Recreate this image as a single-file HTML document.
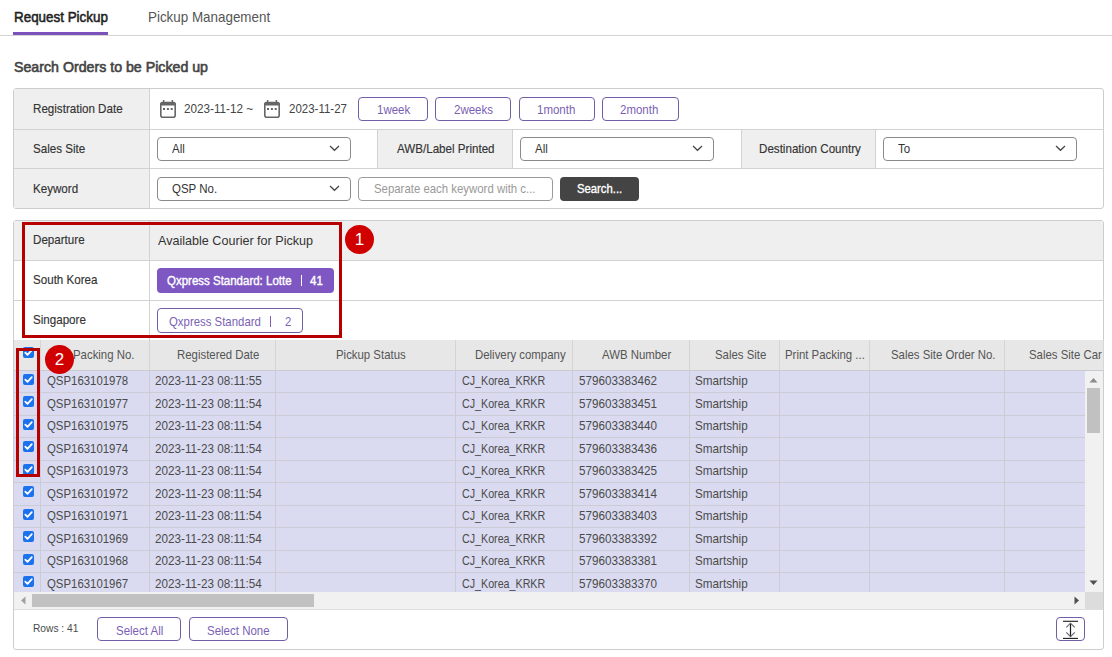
<!DOCTYPE html>
<html><head><meta charset="utf-8">
<style>
html,body{margin:0;padding:0;}
body{width:1112px;height:657px;overflow:hidden;background:#fff;position:relative;font-family:"Liberation Sans",sans-serif;}
.a{position:absolute;}
.t{position:absolute;line-height:1;white-space:nowrap;}
</style></head><body>
<div class="t" style="left:14px;top:9px;font-size:15.0px;color:#222;transform:scaleX(0.8933);transform-origin:0 0;-webkit-text-stroke:0.55px #222;">Request Pickup</div>
<div class="t" style="left:148px;top:9px;font-size:15.0px;color:#555;transform:scaleX(0.8933);transform-origin:0 0;">Pickup Management</div>
<div class="a" style="left:0px;top:35px;width:1112px;height:1px;background:#d4d4d4;"></div>
<div class="a" style="left:13px;top:32px;width:95px;height:3px;background:#7b52b9;"></div>
<div class="t" style="left:14px;top:60px;font-size:14.2px;color:#444;-webkit-text-stroke:0.6px #444;">Search Orders to be Picked up</div>
<div class="a" style="left:13px;top:88px;width:1091px;height:121px;box-sizing:border-box;border:1px solid #cdcdcd;border-radius:3px;"></div>
<div class="a" style="left:14px;top:89px;width:135px;height:119px;background:#efefef;"></div>
<div class="a" style="left:378px;top:130px;width:134px;height:38px;background:#efefef;"></div>
<div class="a" style="left:742px;top:130px;width:133px;height:38px;background:#efefef;"></div>
<div class="a" style="left:14px;top:129px;width:1089px;height:1px;background:#d2d2d2;"></div>
<div class="a" style="left:14px;top:168px;width:1089px;height:1px;background:#d2d2d2;"></div>
<div class="a" style="left:149px;top:89px;width:1px;height:119px;background:#d2d2d2;"></div>
<div class="a" style="left:377px;top:130px;width:1px;height:38px;background:#d2d2d2;"></div>
<div class="a" style="left:512px;top:130px;width:1px;height:38px;background:#d2d2d2;"></div>
<div class="a" style="left:741px;top:130px;width:1px;height:38px;background:#d2d2d2;"></div>
<div class="a" style="left:875px;top:130px;width:1px;height:38px;background:#d2d2d2;"></div>
<div class="t" style="left:33px;top:102px;font-size:13.0px;color:#333;transform:scaleX(0.8923);transform-origin:0 0;-webkit-text-stroke:0.15px #333;">Registration Date</div>
<div class="t" style="left:33px;top:142px;font-size:13.0px;color:#333;transform:scaleX(0.8923);transform-origin:0 0;-webkit-text-stroke:0.15px #333;">Sales Site</div>
<div class="t" style="left:33px;top:182px;font-size:13.0px;color:#333;transform:scaleX(0.8923);transform-origin:0 0;-webkit-text-stroke:0.15px #333;">Keyword</div>
<svg class="a" style="left:160px;top:100px" width="16" height="18" viewBox="0 0 16 18"><rect x="2.9" y="0" width="1.5" height="3" fill="#666"/><rect x="11.6" y="0" width="1.5" height="3" fill="#666"/><rect x="0.8" y="2.5" width="14.4" height="14.7" rx="2" fill="none" stroke="#666" stroke-width="1.6"/><rect x="0.5" y="2" width="15" height="3.4" rx="1.5" fill="#666"/><rect x="3" y="8" width="2" height="2" fill="#666"/><rect x="6.9" y="8" width="2" height="2" fill="#666"/><rect x="10.7" y="8" width="2" height="2" fill="#666"/></svg>
<svg class="a" style="left:264px;top:100px" width="16" height="18" viewBox="0 0 16 18"><rect x="2.9" y="0" width="1.5" height="3" fill="#666"/><rect x="11.6" y="0" width="1.5" height="3" fill="#666"/><rect x="0.8" y="2.5" width="14.4" height="14.7" rx="2" fill="none" stroke="#666" stroke-width="1.6"/><rect x="0.5" y="2" width="15" height="3.4" rx="1.5" fill="#666"/><rect x="3" y="8" width="2" height="2" fill="#666"/><rect x="6.9" y="8" width="2" height="2" fill="#666"/><rect x="10.7" y="8" width="2" height="2" fill="#666"/></svg>
<div class="t" style="left:184px;top:102px;font-size:13.1px;color:#444;transform:scaleX(0.8931);transform-origin:0 0;">2023-11-12 ~</div>
<div class="t" style="left:289px;top:103px;font-size:12.9px;color:#444;transform:scaleX(0.8915);transform-origin:0 0;">2023-11-27</div>
<div class="a" style="left:358px;top:97px;width:70px;height:24px;box-sizing:border-box;border:1px solid #725ea6;border-radius:4px;background:#fff;"></div>
<div class="t" style="left:377px;top:104px;font-size:12.9px;color:#7a5fb5;transform:scaleX(0.8915);transform-origin:0 0;">1week</div>
<div class="a" style="left:435px;top:97px;width:76px;height:24px;box-sizing:border-box;border:1px solid #725ea6;border-radius:4px;background:#fff;"></div>
<div class="t" style="left:454px;top:104px;font-size:12.9px;color:#7a5fb5;transform:scaleX(0.8915);transform-origin:0 0;">2weeks</div>
<div class="a" style="left:519px;top:97px;width:76px;height:24px;box-sizing:border-box;border:1px solid #725ea6;border-radius:4px;background:#fff;"></div>
<div class="t" style="left:537px;top:104px;font-size:12.9px;color:#7a5fb5;transform:scaleX(0.8915);transform-origin:0 0;">1month</div>
<div class="a" style="left:602px;top:97px;width:77px;height:24px;box-sizing:border-box;border:1px solid #725ea6;border-radius:4px;background:#fff;"></div>
<div class="t" style="left:620px;top:104px;font-size:12.9px;color:#7a5fb5;transform:scaleX(0.8915);transform-origin:0 0;">2month</div>
<div class="t" style="left:397px;top:142px;font-size:13.0px;color:#333;transform:scaleX(0.8923);transform-origin:0 0;-webkit-text-stroke:0.15px #333;">AWB/Label Printed</div>
<div class="t" style="left:759px;top:142px;font-size:13.0px;color:#333;transform:scaleX(0.8923);transform-origin:0 0;-webkit-text-stroke:0.15px #333;">Destination Country</div>
<div class="a" style="left:157px;top:137px;width:194px;height:24px;box-sizing:border-box;border:1px solid #8a8a8a;border-radius:4px;background:#fff;"></div>
<div class="t" style="left:172px;top:143px;font-size:12.9px;color:#333;transform:scaleX(0.8915);transform-origin:0 0;">All</div>
<svg class="a" style="left:329px;top:145px" width="11" height="7" viewBox="0 0 11 7"><polyline points="1,1 5.5,5.3 10,1" fill="none" stroke="#444" stroke-width="1.2"/></svg>
<div class="a" style="left:520px;top:137px;width:194px;height:24px;box-sizing:border-box;border:1px solid #8a8a8a;border-radius:4px;background:#fff;"></div>
<div class="t" style="left:535px;top:143px;font-size:12.9px;color:#333;transform:scaleX(0.8915);transform-origin:0 0;">All</div>
<svg class="a" style="left:692px;top:145px" width="11" height="7" viewBox="0 0 11 7"><polyline points="1,1 5.5,5.3 10,1" fill="none" stroke="#444" stroke-width="1.2"/></svg>
<div class="a" style="left:883px;top:137px;width:194px;height:24px;box-sizing:border-box;border:1px solid #8a8a8a;border-radius:4px;background:#fff;"></div>
<div class="t" style="left:898px;top:143px;font-size:12.9px;color:#333;transform:scaleX(0.8915);transform-origin:0 0;">To</div>
<svg class="a" style="left:1055px;top:145px" width="11" height="7" viewBox="0 0 11 7"><polyline points="1,1 5.5,5.3 10,1" fill="none" stroke="#444" stroke-width="1.2"/></svg>
<div class="a" style="left:157px;top:177px;width:194px;height:24px;box-sizing:border-box;border:1px solid #8a8a8a;border-radius:4px;background:#fff;"></div>
<div class="t" style="left:172px;top:183px;font-size:12.9px;color:#333;transform:scaleX(0.8915);transform-origin:0 0;">QSP No.</div>
<svg class="a" style="left:329px;top:185px" width="11" height="7" viewBox="0 0 11 7"><polyline points="1,1 5.5,5.3 10,1" fill="none" stroke="#444" stroke-width="1.2"/></svg>
<div class="a" style="left:358px;top:177px;width:195px;height:24px;box-sizing:border-box;border:1px solid #9a9a9a;border-radius:4px;background:#fff;"></div>
<div class="t" style="left:374px;top:183px;font-size:12.8px;color:#999;transform:scaleX(0.8906);transform-origin:0 0;">Separate each keyword with c...</div>
<div class="a" style="left:560px;top:177px;width:79px;height:24px;background:#444;border-radius:4px;"></div>
<div class="t" style="left:577px;top:183px;font-size:12.7px;color:#fff;transform:scaleX(0.8898);transform-origin:0 0;-webkit-text-stroke:0.35px #fff;">Search...</div>
<div class="a" style="left:13px;top:220px;width:1091px;height:430px;box-sizing:border-box;border:1px solid #cdcdcd;border-radius:3px;"></div>
<div class="a" style="left:14px;top:221px;width:1089px;height:39px;background:#efefef;"></div>
<div class="a" style="left:14px;top:260px;width:1089px;height:1px;background:#d2d2d2;"></div>
<div class="a" style="left:14px;top:300px;width:1089px;height:1px;background:#d2d2d2;"></div>
<div class="a" style="left:149px;top:221px;width:1px;height:119px;background:#d2d2d2;"></div>
<div class="t" style="left:33px;top:233px;font-size:13.0px;color:#333;transform:scaleX(0.8923);transform-origin:0 0;-webkit-text-stroke:0.15px #333;">Departure</div>
<div class="t" style="left:157.5px;top:234px;font-size:13.2px;color:#333;transform:scaleX(0.9545);transform-origin:0 0;">Available Courier for Pickup</div>
<div class="t" style="left:33px;top:273px;font-size:13.0px;color:#333;transform:scaleX(0.8923);transform-origin:0 0;-webkit-text-stroke:0.15px #333;">South Korea</div>
<div class="t" style="left:33px;top:313px;font-size:13.0px;color:#333;transform:scaleX(0.8923);transform-origin:0 0;-webkit-text-stroke:0.15px #333;">Singapore</div>
<div class="a" style="left:157px;top:268px;width:177px;height:25px;background:#7e57c2;border-radius:4px;"></div>
<div class="t" style="left:167.4px;top:275px;font-size:12.9px;color:#fff;transform:scaleX(0.8915);transform-origin:0 0;-webkit-text-stroke:0.4px #fff;">Qxpress Standard: Lotte</div>
<div class="a" style="left:301px;top:275px;width:1px;height:11px;background:#fff;"></div>
<div class="t" style="left:310px;top:275px;font-size:12.9px;color:#fff;transform:scaleX(0.8915);transform-origin:0 0;-webkit-text-stroke:0.4px #fff;">41</div>
<div class="a" style="left:157px;top:308px;width:146px;height:25px;box-sizing:border-box;border:1px solid #725ea6;border-radius:4px;background:#fff;"></div>
<div class="t" style="left:169px;top:316px;font-size:12.8px;color:#7a5fb5;transform:scaleX(0.8906);transform-origin:0 0;">Qxpress Standard</div>
<div class="a" style="left:270px;top:316px;width:1px;height:11px;background:#7a5fb5;"></div>
<div class="t" style="left:285px;top:316px;font-size:12.8px;color:#7a5fb5;transform:scaleX(0.8906);transform-origin:0 0;">2</div>
<div class="a" style="left:14px;top:340px;width:1089px;height:30px;background:#e7e7e7;"></div>
<div class="a" style="left:14px;top:371px;width:1071px;height:221px;background:#dadbf0;"></div>
<div class="a" style="left:14px;top:370px;width:1089px;height:1px;background:#c9c9d1;"></div>
<div class="a" style="left:40px;top:340px;width:1px;height:30px;background:#d4d4d4;"></div>
<div class="a" style="left:40px;top:370px;width:1px;height:222px;background:#cbccd4;"></div>
<div class="a" style="left:149px;top:340px;width:1px;height:30px;background:#d4d4d4;"></div>
<div class="a" style="left:149px;top:370px;width:1px;height:222px;background:#cbccd4;"></div>
<div class="a" style="left:275px;top:340px;width:1px;height:30px;background:#d4d4d4;"></div>
<div class="a" style="left:275px;top:370px;width:1px;height:222px;background:#cbccd4;"></div>
<div class="a" style="left:455px;top:340px;width:1px;height:30px;background:#d4d4d4;"></div>
<div class="a" style="left:455px;top:370px;width:1px;height:222px;background:#cbccd4;"></div>
<div class="a" style="left:572px;top:340px;width:1px;height:30px;background:#d4d4d4;"></div>
<div class="a" style="left:572px;top:370px;width:1px;height:222px;background:#cbccd4;"></div>
<div class="a" style="left:689px;top:340px;width:1px;height:30px;background:#d4d4d4;"></div>
<div class="a" style="left:689px;top:370px;width:1px;height:222px;background:#cbccd4;"></div>
<div class="a" style="left:779px;top:340px;width:1px;height:30px;background:#d4d4d4;"></div>
<div class="a" style="left:779px;top:370px;width:1px;height:222px;background:#cbccd4;"></div>
<div class="a" style="left:869px;top:340px;width:1px;height:30px;background:#d4d4d4;"></div>
<div class="a" style="left:869px;top:370px;width:1px;height:222px;background:#cbccd4;"></div>
<div class="a" style="left:1004px;top:340px;width:1px;height:30px;background:#d4d4d4;"></div>
<div class="a" style="left:1004px;top:370px;width:1px;height:222px;background:#cbccd4;"></div>
<div class="a" style="left:14px;top:392px;width:1071px;height:1px;background:#cbccd4;"></div>
<div class="a" style="left:14px;top:415px;width:1071px;height:1px;background:#cbccd4;"></div>
<div class="a" style="left:14px;top:437px;width:1071px;height:1px;background:#cbccd4;"></div>
<div class="a" style="left:14px;top:460px;width:1071px;height:1px;background:#cbccd4;"></div>
<div class="a" style="left:14px;top:482px;width:1071px;height:1px;background:#cbccd4;"></div>
<div class="a" style="left:14px;top:505px;width:1071px;height:1px;background:#cbccd4;"></div>
<div class="a" style="left:14px;top:527px;width:1071px;height:1px;background:#cbccd4;"></div>
<div class="a" style="left:14px;top:550px;width:1071px;height:1px;background:#cbccd4;"></div>
<div class="a" style="left:14px;top:572px;width:1071px;height:1px;background:#cbccd4;"></div>
<div class="a" style="left:23px;top:374px;width:11px;height:11px;border-radius:2px;background:#1b72ec;"><svg style="display:block" width="11" height="11" viewBox="0 0 11 11"><polyline points="2.3,5.6 4.5,7.9 8.8,3.1" fill="none" stroke="#fff" stroke-width="1.8" stroke-linecap="round" stroke-linejoin="round"/></svg></div>
<div class="t" style="left:47px;top:375px;font-size:12.8px;color:#4a4a4a;transform:scaleX(0.8906);transform-origin:0 0;">QSP163101978</div>
<div class="t" style="left:155px;top:374px;font-size:13.1px;color:#4a4a4a;transform:scaleX(0.8931);transform-origin:0 0;">2023-11-23 08:11:55</div>
<div class="t" style="left:461.5px;top:374px;font-size:13.1px;color:#4a4a4a;transform:scaleX(0.8168);transform-origin:0 0;">CJ_Korea_KRKR</div>
<div class="t" style="left:578.5px;top:374px;font-size:13.1px;color:#4a4a4a;transform:scaleX(0.8931);transform-origin:0 0;">579603383462</div>
<div class="t" style="left:695px;top:374px;font-size:13.1px;color:#4a4a4a;transform:scaleX(0.8931);transform-origin:0 0;">Smartship</div>
<div class="a" style="left:23px;top:396px;width:11px;height:11px;border-radius:2px;background:#1b72ec;"><svg style="display:block" width="11" height="11" viewBox="0 0 11 11"><polyline points="2.3,5.6 4.5,7.9 8.8,3.1" fill="none" stroke="#fff" stroke-width="1.8" stroke-linecap="round" stroke-linejoin="round"/></svg></div>
<div class="t" style="left:47px;top:398px;font-size:12.8px;color:#4a4a4a;transform:scaleX(0.8906);transform-origin:0 0;">QSP163101977</div>
<div class="t" style="left:155px;top:397px;font-size:13.1px;color:#4a4a4a;transform:scaleX(0.8931);transform-origin:0 0;">2023-11-23 08:11:54</div>
<div class="t" style="left:461.5px;top:397px;font-size:13.1px;color:#4a4a4a;transform:scaleX(0.8168);transform-origin:0 0;">CJ_Korea_KRKR</div>
<div class="t" style="left:578.5px;top:397px;font-size:13.1px;color:#4a4a4a;transform:scaleX(0.8931);transform-origin:0 0;">579603383451</div>
<div class="t" style="left:695px;top:397px;font-size:13.1px;color:#4a4a4a;transform:scaleX(0.8931);transform-origin:0 0;">Smartship</div>
<div class="a" style="left:23px;top:419px;width:11px;height:11px;border-radius:2px;background:#1b72ec;"><svg style="display:block" width="11" height="11" viewBox="0 0 11 11"><polyline points="2.3,5.6 4.5,7.9 8.8,3.1" fill="none" stroke="#fff" stroke-width="1.8" stroke-linecap="round" stroke-linejoin="round"/></svg></div>
<div class="t" style="left:47px;top:420px;font-size:12.8px;color:#4a4a4a;transform:scaleX(0.8906);transform-origin:0 0;">QSP163101975</div>
<div class="t" style="left:155px;top:419px;font-size:13.1px;color:#4a4a4a;transform:scaleX(0.8931);transform-origin:0 0;">2023-11-23 08:11:54</div>
<div class="t" style="left:461.5px;top:419px;font-size:13.1px;color:#4a4a4a;transform:scaleX(0.8168);transform-origin:0 0;">CJ_Korea_KRKR</div>
<div class="t" style="left:578.5px;top:419px;font-size:13.1px;color:#4a4a4a;transform:scaleX(0.8931);transform-origin:0 0;">579603383440</div>
<div class="t" style="left:695px;top:419px;font-size:13.1px;color:#4a4a4a;transform:scaleX(0.8931);transform-origin:0 0;">Smartship</div>
<div class="a" style="left:23px;top:441px;width:11px;height:11px;border-radius:2px;background:#1b72ec;"><svg style="display:block" width="11" height="11" viewBox="0 0 11 11"><polyline points="2.3,5.6 4.5,7.9 8.8,3.1" fill="none" stroke="#fff" stroke-width="1.8" stroke-linecap="round" stroke-linejoin="round"/></svg></div>
<div class="t" style="left:47px;top:443px;font-size:12.8px;color:#4a4a4a;transform:scaleX(0.8906);transform-origin:0 0;">QSP163101974</div>
<div class="t" style="left:155px;top:442px;font-size:13.1px;color:#4a4a4a;transform:scaleX(0.8931);transform-origin:0 0;">2023-11-23 08:11:54</div>
<div class="t" style="left:461.5px;top:442px;font-size:13.1px;color:#4a4a4a;transform:scaleX(0.8168);transform-origin:0 0;">CJ_Korea_KRKR</div>
<div class="t" style="left:578.5px;top:442px;font-size:13.1px;color:#4a4a4a;transform:scaleX(0.8931);transform-origin:0 0;">579603383436</div>
<div class="t" style="left:695px;top:442px;font-size:13.1px;color:#4a4a4a;transform:scaleX(0.8931);transform-origin:0 0;">Smartship</div>
<div class="a" style="left:23px;top:464px;width:11px;height:11px;border-radius:2px;background:#1b72ec;"><svg style="display:block" width="11" height="11" viewBox="0 0 11 11"><polyline points="2.3,5.6 4.5,7.9 8.8,3.1" fill="none" stroke="#fff" stroke-width="1.8" stroke-linecap="round" stroke-linejoin="round"/></svg></div>
<div class="t" style="left:47px;top:465px;font-size:12.8px;color:#4a4a4a;transform:scaleX(0.8906);transform-origin:0 0;">QSP163101973</div>
<div class="t" style="left:155px;top:464px;font-size:13.1px;color:#4a4a4a;transform:scaleX(0.8931);transform-origin:0 0;">2023-11-23 08:11:54</div>
<div class="t" style="left:461.5px;top:464px;font-size:13.1px;color:#4a4a4a;transform:scaleX(0.8168);transform-origin:0 0;">CJ_Korea_KRKR</div>
<div class="t" style="left:578.5px;top:464px;font-size:13.1px;color:#4a4a4a;transform:scaleX(0.8931);transform-origin:0 0;">579603383425</div>
<div class="t" style="left:695px;top:464px;font-size:13.1px;color:#4a4a4a;transform:scaleX(0.8931);transform-origin:0 0;">Smartship</div>
<div class="a" style="left:23px;top:486px;width:11px;height:11px;border-radius:2px;background:#1b72ec;"><svg style="display:block" width="11" height="11" viewBox="0 0 11 11"><polyline points="2.3,5.6 4.5,7.9 8.8,3.1" fill="none" stroke="#fff" stroke-width="1.8" stroke-linecap="round" stroke-linejoin="round"/></svg></div>
<div class="t" style="left:47px;top:488px;font-size:12.8px;color:#4a4a4a;transform:scaleX(0.8906);transform-origin:0 0;">QSP163101972</div>
<div class="t" style="left:155px;top:487px;font-size:13.1px;color:#4a4a4a;transform:scaleX(0.8931);transform-origin:0 0;">2023-11-23 08:11:54</div>
<div class="t" style="left:461.5px;top:487px;font-size:13.1px;color:#4a4a4a;transform:scaleX(0.8168);transform-origin:0 0;">CJ_Korea_KRKR</div>
<div class="t" style="left:578.5px;top:487px;font-size:13.1px;color:#4a4a4a;transform:scaleX(0.8931);transform-origin:0 0;">579603383414</div>
<div class="t" style="left:695px;top:487px;font-size:13.1px;color:#4a4a4a;transform:scaleX(0.8931);transform-origin:0 0;">Smartship</div>
<div class="a" style="left:23px;top:509px;width:11px;height:11px;border-radius:2px;background:#1b72ec;"><svg style="display:block" width="11" height="11" viewBox="0 0 11 11"><polyline points="2.3,5.6 4.5,7.9 8.8,3.1" fill="none" stroke="#fff" stroke-width="1.8" stroke-linecap="round" stroke-linejoin="round"/></svg></div>
<div class="t" style="left:47px;top:510px;font-size:12.8px;color:#4a4a4a;transform:scaleX(0.8906);transform-origin:0 0;">QSP163101971</div>
<div class="t" style="left:155px;top:509px;font-size:13.1px;color:#4a4a4a;transform:scaleX(0.8931);transform-origin:0 0;">2023-11-23 08:11:54</div>
<div class="t" style="left:461.5px;top:509px;font-size:13.1px;color:#4a4a4a;transform:scaleX(0.8168);transform-origin:0 0;">CJ_Korea_KRKR</div>
<div class="t" style="left:578.5px;top:509px;font-size:13.1px;color:#4a4a4a;transform:scaleX(0.8931);transform-origin:0 0;">579603383403</div>
<div class="t" style="left:695px;top:509px;font-size:13.1px;color:#4a4a4a;transform:scaleX(0.8931);transform-origin:0 0;">Smartship</div>
<div class="a" style="left:23px;top:531px;width:11px;height:11px;border-radius:2px;background:#1b72ec;"><svg style="display:block" width="11" height="11" viewBox="0 0 11 11"><polyline points="2.3,5.6 4.5,7.9 8.8,3.1" fill="none" stroke="#fff" stroke-width="1.8" stroke-linecap="round" stroke-linejoin="round"/></svg></div>
<div class="t" style="left:47px;top:533px;font-size:12.8px;color:#4a4a4a;transform:scaleX(0.8906);transform-origin:0 0;">QSP163101969</div>
<div class="t" style="left:155px;top:532px;font-size:13.1px;color:#4a4a4a;transform:scaleX(0.8931);transform-origin:0 0;">2023-11-23 08:11:54</div>
<div class="t" style="left:461.5px;top:532px;font-size:13.1px;color:#4a4a4a;transform:scaleX(0.8168);transform-origin:0 0;">CJ_Korea_KRKR</div>
<div class="t" style="left:578.5px;top:532px;font-size:13.1px;color:#4a4a4a;transform:scaleX(0.8931);transform-origin:0 0;">579603383392</div>
<div class="t" style="left:695px;top:532px;font-size:13.1px;color:#4a4a4a;transform:scaleX(0.8931);transform-origin:0 0;">Smartship</div>
<div class="a" style="left:23px;top:554px;width:11px;height:11px;border-radius:2px;background:#1b72ec;"><svg style="display:block" width="11" height="11" viewBox="0 0 11 11"><polyline points="2.3,5.6 4.5,7.9 8.8,3.1" fill="none" stroke="#fff" stroke-width="1.8" stroke-linecap="round" stroke-linejoin="round"/></svg></div>
<div class="t" style="left:47px;top:555px;font-size:12.8px;color:#4a4a4a;transform:scaleX(0.8906);transform-origin:0 0;">QSP163101968</div>
<div class="t" style="left:155px;top:554px;font-size:13.1px;color:#4a4a4a;transform:scaleX(0.8931);transform-origin:0 0;">2023-11-23 08:11:54</div>
<div class="t" style="left:461.5px;top:554px;font-size:13.1px;color:#4a4a4a;transform:scaleX(0.8168);transform-origin:0 0;">CJ_Korea_KRKR</div>
<div class="t" style="left:578.5px;top:554px;font-size:13.1px;color:#4a4a4a;transform:scaleX(0.8931);transform-origin:0 0;">579603383381</div>
<div class="t" style="left:695px;top:554px;font-size:13.1px;color:#4a4a4a;transform:scaleX(0.8931);transform-origin:0 0;">Smartship</div>
<div class="a" style="left:23px;top:576px;width:11px;height:11px;border-radius:2px;background:#1b72ec;"><svg style="display:block" width="11" height="11" viewBox="0 0 11 11"><polyline points="2.3,5.6 4.5,7.9 8.8,3.1" fill="none" stroke="#fff" stroke-width="1.8" stroke-linecap="round" stroke-linejoin="round"/></svg></div>
<div class="t" style="left:47px;top:578px;font-size:12.8px;color:#4a4a4a;transform:scaleX(0.8906);transform-origin:0 0;">QSP163101967</div>
<div class="t" style="left:155px;top:577px;font-size:13.1px;color:#4a4a4a;transform:scaleX(0.8931);transform-origin:0 0;">2023-11-23 08:11:54</div>
<div class="t" style="left:461.5px;top:577px;font-size:13.1px;color:#4a4a4a;transform:scaleX(0.8168);transform-origin:0 0;">CJ_Korea_KRKR</div>
<div class="t" style="left:578.5px;top:577px;font-size:13.1px;color:#4a4a4a;transform:scaleX(0.8931);transform-origin:0 0;">579603383370</div>
<div class="t" style="left:695px;top:577px;font-size:13.1px;color:#4a4a4a;transform:scaleX(0.8931);transform-origin:0 0;">Smartship</div>
<div class="t" style="left:72.5px;top:349px;font-size:12.8px;color:#555;transform:scaleX(0.8906);transform-origin:0 0;">Packing No.</div>
<div class="t" style="left:177.3px;top:349px;font-size:12.8px;color:#555;transform:scaleX(0.8906);transform-origin:0 0;">Registered Date</div>
<div class="t" style="left:335.7px;top:349px;font-size:12.8px;color:#555;transform:scaleX(0.8906);transform-origin:0 0;">Pickup Status</div>
<div class="t" style="left:474.5px;top:349px;font-size:12.8px;color:#555;transform:scaleX(0.8906);transform-origin:0 0;">Delivery company</div>
<div class="t" style="left:602.3px;top:349px;font-size:12.8px;color:#555;transform:scaleX(0.8906);transform-origin:0 0;">AWB Number</div>
<div class="t" style="left:715.4px;top:349px;font-size:12.8px;color:#555;transform:scaleX(0.8906);transform-origin:0 0;">Sales Site</div>
<div class="t" style="left:784.5px;top:349px;font-size:12.8px;color:#555;transform:scaleX(0.8906);transform-origin:0 0;">Print Packing ...</div>
<div class="t" style="left:890.9px;top:349px;font-size:12.8px;color:#555;transform:scaleX(0.8906);transform-origin:0 0;">Sales Site Order No.</div>
<div class="t" style="left:1029.4px;top:349px;font-size:12.8px;color:#555;transform:scaleX(0.8906);transform-origin:0 0;">Sales Site Car</div>
<div class="a" style="left:1103px;top:340px;width:9px;height:30px;background:#fff;"></div>
<div class="a" style="left:1103px;top:340px;width:1px;height:30px;background:#d6d6d6;"></div>
<div class="a" style="left:23px;top:347px;width:11px;height:11px;border-radius:2px;background:#1b72ec;"><svg style="display:block" width="11" height="11" viewBox="0 0 11 11"><polyline points="2.3,5.6 4.5,7.9 8.8,3.1" fill="none" stroke="#fff" stroke-width="1.8" stroke-linecap="round" stroke-linejoin="round"/></svg></div>
<div class="a" style="left:1085px;top:371px;width:18px;height:221px;background:#f1f1f1;"></div>
<div class="a" style="left:1087px;top:388px;width:13px;height:45px;background:#c1c1c1;"></div>
<svg class="a" style="left:1089px;top:377px" width="9" height="6" viewBox="0 0 9 6"><polygon points="0.5,5.5 4.5,1 8.5,5.5" fill="#8a8a8a"/></svg>
<svg class="a" style="left:1089px;top:580px" width="9" height="6" viewBox="0 0 9 6"><polygon points="0.5,0.5 4.5,5 8.5,0.5" fill="#505050"/></svg>
<div class="a" style="left:14px;top:592px;width:1071px;height:17px;background:#f1f1f1;"></div>
<div class="a" style="left:32px;top:594px;width:282px;height:13px;background:#c1c1c1;"></div>
<div class="a" style="left:1085px;top:592px;width:18px;height:17px;background:#dcdcdc;"></div>
<svg class="a" style="left:20px;top:596px" width="6" height="9" viewBox="0 0 6 9"><polygon points="5.5,0.5 1,4.5 5.5,8.5" fill="#a0a0a0"/></svg>
<svg class="a" style="left:1074px;top:596px" width="6" height="9" viewBox="0 0 6 9"><polygon points="0.5,0.5 5,4.5 0.5,8.5" fill="#505050"/></svg>
<div class="a" style="left:14px;top:609px;width:1089px;height:1px;background:#dedede;"></div>
<div class="t" style="left:33px;top:623px;font-size:11.4px;color:#4a4a4a;transform:scaleX(0.8947);transform-origin:0 0;">Rows : 41</div>
<div class="a" style="left:97px;top:617px;width:84px;height:24px;box-sizing:border-box;border:1px solid #725ea6;border-radius:4px;background:#fff;"></div>
<div class="a" style="left:189px;top:617px;width:99px;height:24px;box-sizing:border-box;border:1px solid #725ea6;border-radius:4px;background:#fff;"></div>
<div class="t" style="left:115.7px;top:625px;font-size:12.9px;color:#7a5fb5;transform:scaleX(0.8915);transform-origin:0 0;">Select All</div>
<div class="t" style="left:207px;top:625px;font-size:12.9px;color:#7a5fb5;transform:scaleX(0.8915);transform-origin:0 0;">Select None</div>
<div class="a" style="left:1056px;top:617px;width:29px;height:24px;box-sizing:border-box;border:1px solid #725ea6;border-radius:4px;background:#fff;"></div>
<svg class="a" style="left:1062px;top:620px" width="17" height="20" viewBox="0 0 17 20"><line x1="1" y1="1.3" x2="16" y2="1.3" stroke="#1a1a1a" stroke-width="1.1"/><line x1="1" y1="18.4" x2="16" y2="18.4" stroke="#1a1a1a" stroke-width="1.1"/><line x1="8.5" y1="3.2" x2="8.5" y2="16.6" stroke="#1a1a1a" stroke-width="1.2"/><polyline points="4.3,7.4 8.5,3.2 12.7,7.4" fill="none" stroke="#666" stroke-width="1.1"/><polyline points="4.3,12.4 8.5,16.6 12.7,12.4" fill="none" stroke="#666" stroke-width="1.1"/></svg>
<div class="a" style="left:22px;top:222px;width:320px;height:116px;box-sizing:border-box;border:3px solid #b60000;"></div>
<div class="a" style="left:345px;top:225px;width:29px;height:29px;border-radius:50%;background:#d10000;"></div>
<div class="t" style="left:345px;top:231px;width:29px;text-align:center;font-size:17px;color:#fff;">1</div>
<div class="a" style="left:16px;top:348px;width:24px;height:129px;box-sizing:border-box;border:3px solid #b60000;"></div>
<div class="a" style="left:45px;top:345px;width:29px;height:29px;border-radius:50%;background:#d10000;"></div>
<div class="t" style="left:45px;top:351px;width:29px;text-align:center;font-size:17px;color:#fff;">2</div>
</body></html>
